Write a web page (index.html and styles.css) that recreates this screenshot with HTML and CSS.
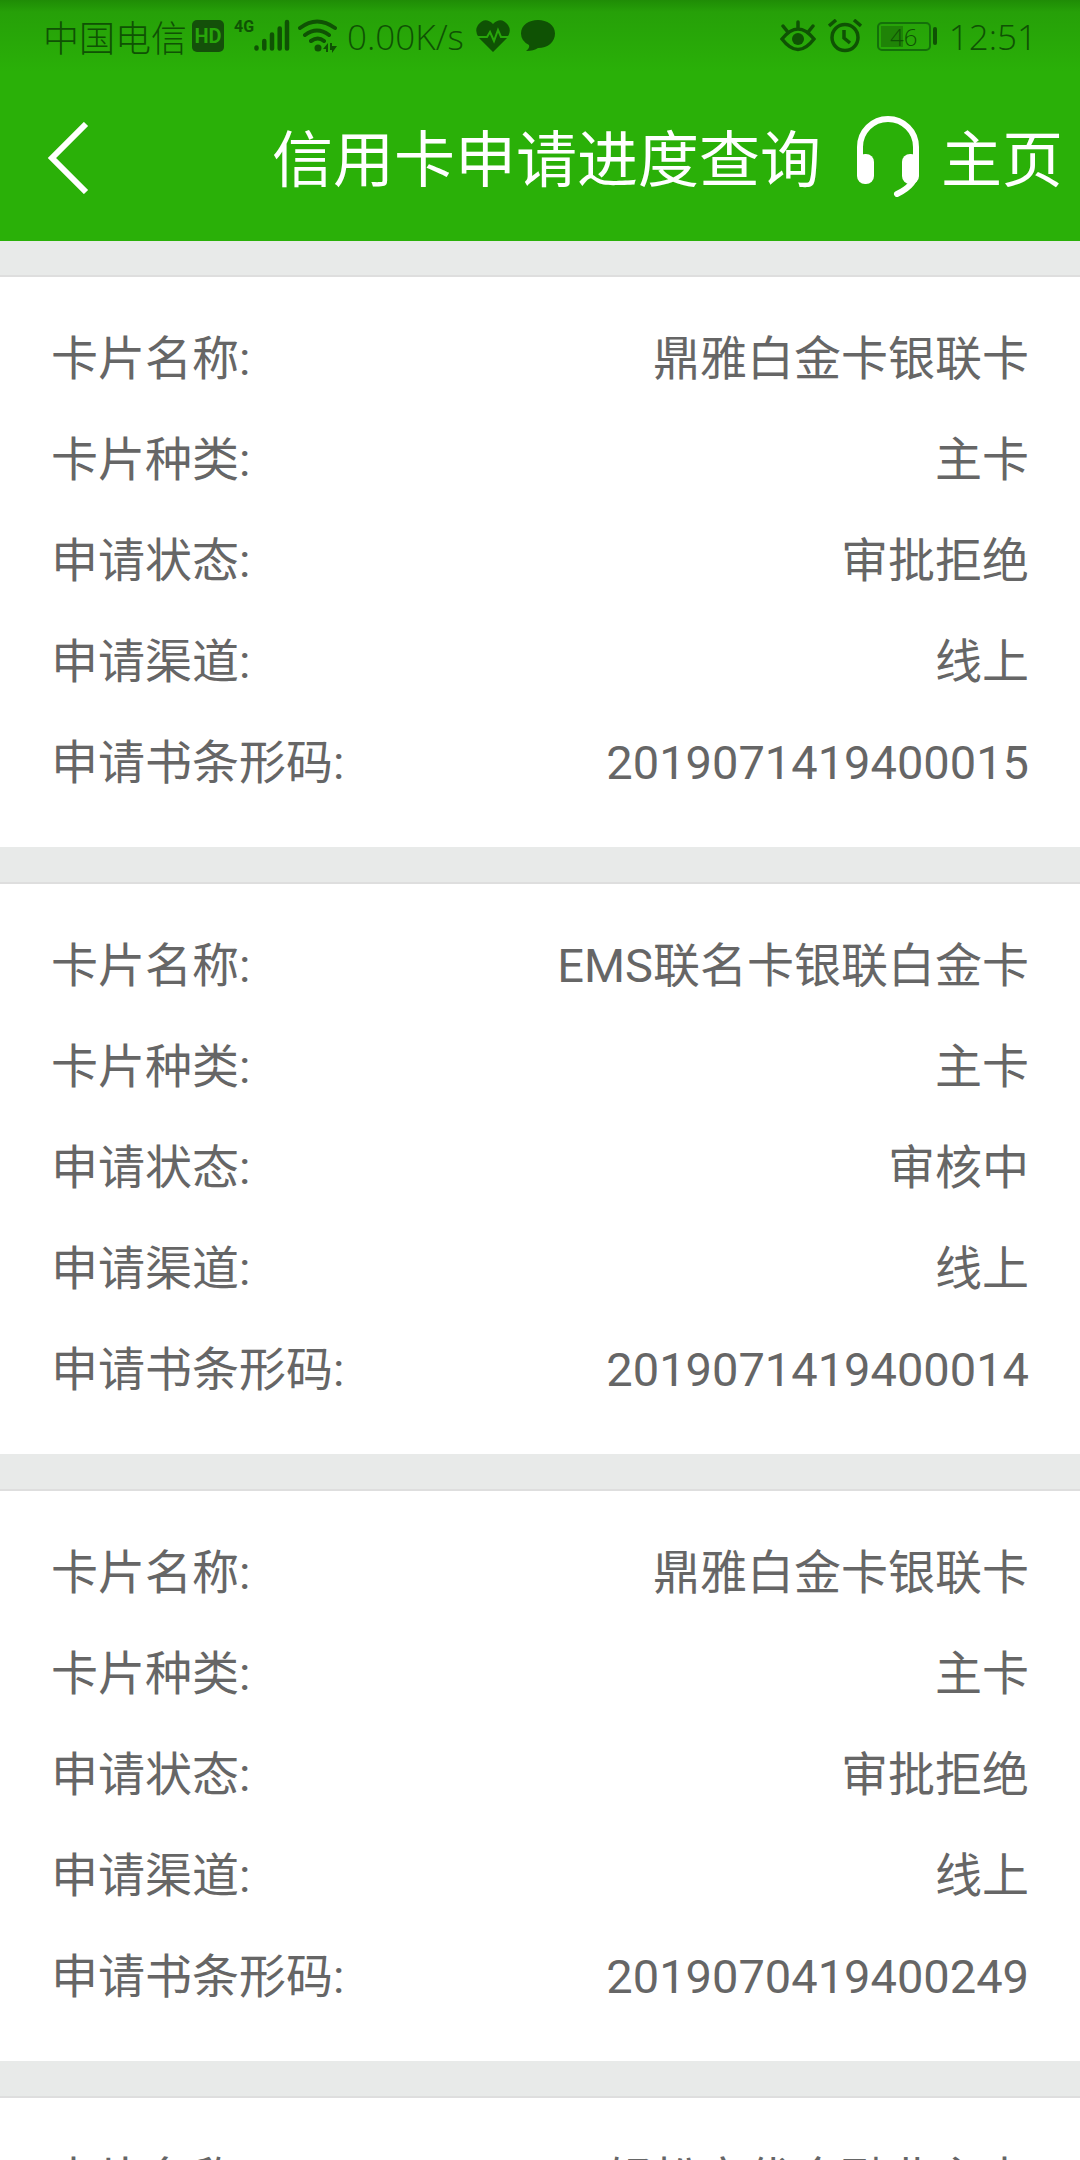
FILE: index.html
```
<!DOCTYPE html>
<html lang="zh-CN">
<head>
  <meta charset="UTF-8" />
  <meta name="viewport" content="width=device-width, initial-scale=1.0"/>
  <title>信用卡申请进度查询</title>
  <link rel="stylesheet" href="styles.css">
</head>
<body>
  <header class="header">
    <div class="status-bar">
      <div class="status-left">
        <span class="carrier">中国电信</span>
        <span class="hd">HD</span>
        <span class="network">4G</span>
        <svg class="signal" width="36" height="34" viewBox="0 0 36 34" fill="none" stroke="currentColor" stroke-width="4.5" stroke-linecap="round">
          <path d="M2.5 28.5v1M10.3 22v7.500M18 15.500v14M25.700 9.500v20M33 3v26.500"/>
        </svg>
        <svg class="wifi" width="40" height="34" viewBox="0 0 40 34" fill="none" stroke="currentColor" stroke-width="4" stroke-linecap="round">
          <path d="M2 9Q19-4 37 9M7 16q12-9 24 0M13 22q7-5 13 0"/>
          <circle cx="20" cy="29" r="3.500" fill="currentColor" stroke="none"/>
          <path d="M25 30l5-6v9h-2v-3zM32 24h2v3h5l-5 7v-3h-2z" fill="currentColor" stroke="none"/>
        </svg>
        <span class="speed">0.00K/s</span>
        <svg class="heart" width="34" height="32" viewBox="0 0 34 32">
          <path d="M17 32L3 18Q-2 11 2 5Q9-4 17 4Q25-4 32 5Q36 11 31 18Z" fill="currentColor"/>
          <path d="M0 17h11l3-5 4 9 4-11 3 7h9" fill="none" stroke="#28a60a" stroke-width="2"/>
        </svg>
        <svg class="bubble" width="34" height="32" viewBox="0 0 34 32" fill="currentColor">
          <path d="M17 0C26 0 34 5 34 13.500S27 28 17 28Q13 31 5 31Q9 28 8 25Q0 21 0 13.500C0 5 8 0 17 0Z"/>
        </svg>
      </div>
      <div class="status-right">
        <svg width="36" height="32" viewBox="0 0 36 32" fill="none" stroke="currentColor" stroke-width="3.500" stroke-linecap="round">
          <path d="M2 19Q18-1 34 19Q18 40 2 19ZM18 2v6M3 6l4 5M33 6l-4 5"/>
          <circle cx="18" cy="19" r="6" fill="currentColor" stroke="none"/>
        </svg>
        <svg width="34" height="34" viewBox="0 0 34 34" fill="none" stroke="currentColor" stroke-width="3.500">
          <circle cx="17" cy="18.500" r="13"/>
          <path d="M16 11v8l6 5M1 7l7-6M26 1l7 6"/>
        </svg>
        <span class="battery"><span class="battery-level">46</span></span>
        <span class="clock">12:51</span>
      </div>
    </div>

    <div class="nav-bar">
      <button class="back-button" aria-label="返回">
        <svg width="42" height="72" viewBox="0 0 42 72" fill="none" stroke="currentColor" stroke-width="6">
          <path d="M39 2L5 36l34 34"/>
        </svg>
      </button>
      <h1>信用卡申请进度查询</h1>
      <a class="service" href="#" aria-label="客服">
        <svg width="62" height="82" viewBox="0 0 62 82" fill="none" stroke="currentColor" stroke-width="6" stroke-linecap="round">
          <path d="M3 56V32a28 28 0 0 1 56 0v24Q59 70 40 79"/>
          <rect x="0" y="39" width="17" height="30" rx="8" fill="currentColor" stroke="none"/>
          <rect x="45" y="39" width="17" height="30" rx="8" fill="currentColor" stroke="none"/>
        </svg>
      </a>
      <a class="home" href="#">主页</a>
    </div>
  </header>

  <main class="list">
    <dl class="card">
      <div class="row"><dt>卡片名称:</dt><dd>鼎雅白金卡银联卡</dd></div>
      <div class="row"><dt>卡片种类:</dt><dd>主卡</dd></div>
      <div class="row"><dt>申请状态:</dt><dd>审批拒绝</dd></div>
      <div class="row"><dt>申请渠道:</dt><dd>线上</dd></div>
      <div class="row"><dt>申请书条形码:</dt><dd>2019071419400015</dd></div>
    </dl>

    <dl class="card">
      <div class="row"><dt>卡片名称:</dt><dd>EMS联名卡银联白金卡</dd></div>
      <div class="row"><dt>卡片种类:</dt><dd>主卡</dd></div>
      <div class="row"><dt>申请状态:</dt><dd>审核中</dd></div>
      <div class="row"><dt>申请渠道:</dt><dd>线上</dd></div>
      <div class="row"><dt>申请书条形码:</dt><dd>2019071419400014</dd></div>
    </dl>

    <dl class="card">
      <div class="row"><dt>卡片名称:</dt><dd>鼎雅白金卡银联卡</dd></div>
      <div class="row"><dt>卡片种类:</dt><dd>主卡</dd></div>
      <div class="row"><dt>申请状态:</dt><dd>审批拒绝</dd></div>
      <div class="row"><dt>申请渠道:</dt><dd>线上</dd></div>
      <div class="row"><dt>申请书条形码:</dt><dd>2019070419400249</dd></div>
    </dl>

    <dl class="card">
      <div class="row"><dt>卡片名称:</dt><dd>轻松享优金融业主卡</dd></div>
    </dl>
  </main>
</body>
</html>
```
FILE: styles.css
```
:root {
  --green: #2ab008;
  --status: #0f5204;
  --bg: #e8eae9;
  --line: #dedede;
  --text: #666;
}

* {
  box-sizing: border-box;
}

body {
  margin: 0;
  height: 100vh;
  overflow: hidden;
  background: var(--bg);
  color: var(--text);
  font-family: Roboto, "Noto Sans CJK SC", sans-serif;
}

.header {
  background: linear-gradient(#1f8c06, #26a008 12px, var(--green) 72px);
}

/* Status bar */
.status-bar {
  display: flex;
  justify-content: space-between;
  height: 80px;
  padding: 0 43px 8px 43px;
  color: var(--status);
}

.status-left,
.status-right {
  display: flex;
  align-items: center;
}

.carrier {
  font-size: 36px;
  font-weight: 300;
}

.hd {
  width: 32px;
  margin-left: 5px;
  border-radius: 5px;
  background: #14500a;
  color: #28a60a;
  font-size: 20px;
  font-weight: 700;
  line-height: 32px;
  text-align: center;
}

.network {
  align-self: flex-start;
  width: 20px;
  margin: 17px 0 0 10px;
  font-size: 16px;
  font-weight: 700;
  line-height: 20px;
}

.wifi {
  margin-left: 8px;
}

.speed {
  margin-left: 9px;
  font-family: "Open Sans", sans-serif;
  font-size: 35px;
  font-weight: 300;
}

.heart {
  margin-left: 12px;
}

.bubble {
  margin-left: 11px;
}

.status-right {
  gap: 12px;
}

.battery {
  position: relative;
  width: 54px;
  height: 29px;
  margin: 0 6px 0 3px;
  padding: 2px;
  border: 2px solid #14700a;
  border-radius: 5px;
}

.battery::after {
  content: "";
  position: absolute;
  top: 3px;
  right: -8px;
  width: 4px;
  height: 18px;
  border-radius: 2px;
  background: var(--status);
}

.battery-level {
  display: block;
  background: linear-gradient(90deg, #1f8307 22px, transparent 22px);
  font-family: "Open Sans", sans-serif;
  font-size: 24px;
  font-weight: 300;
  line-height: 21px;
  text-align: center;
}

.clock {
  font-family: "Open Sans", sans-serif;
  font-size: 35px;
  font-weight: 300;
}

/* Title bar */
.nav-bar {
  display: flex;
  align-items: center;
  height: 161px;
  padding: 0 17px 0 47px;
  color: #fff;
}

.back-button {
  margin-bottom: 6px;
  padding: 0;
  border: none;
  background: transparent;
  color: inherit;
  line-height: 0;
}

h1 {
  margin: 0 0 0 auto;
  font-size: 61px;
  font-weight: 400;
  line-height: 80px;
}

.service {
  margin: 0 22px 10px 36px;
  color: inherit;
  line-height: 0;
}

.home {
  color: inherit;
  font-size: 61px;
  font-weight: 400;
  line-height: 80px;
  text-decoration: none;
}

/* Application cards */
.list {
  padding-top: 34px;
}

.card {
  margin: 0 0 35px;
  padding: 31px 51px 34px;
  border-top: 2px solid var(--line);
  background: #fff;
}

.row {
  display: flex;
  justify-content: space-between;
  font-size: 47px;
  line-height: 101px;
}

dd {
  margin: 0;
}
```
